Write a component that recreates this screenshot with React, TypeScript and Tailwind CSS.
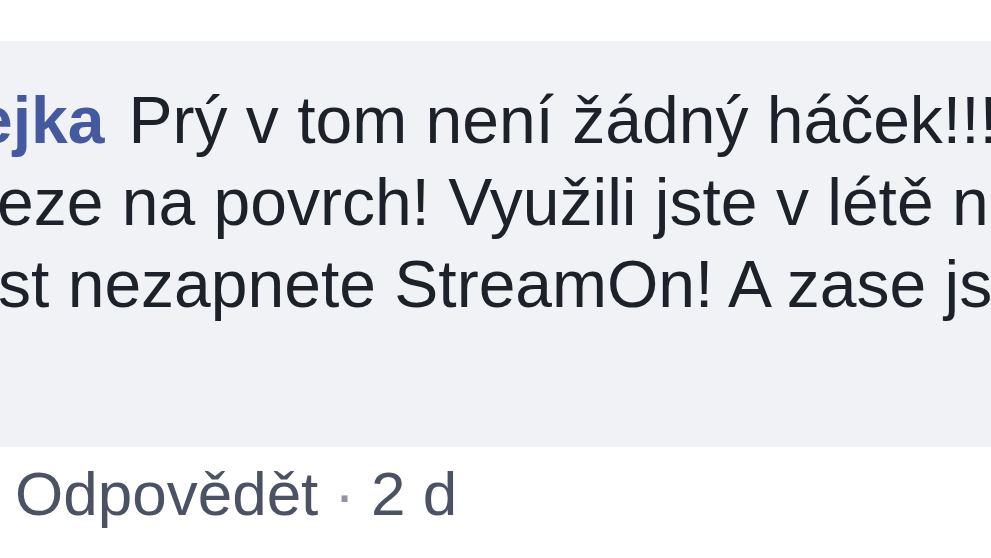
export default function App() {
  return (
    <div className="h-[558px] w-[991px] overflow-hidden bg-white font-['Liberation_Sans',Arial,sans-serif]">
      <div className="h-[41px]" />

      {/* comment bubble */}
      <div className="h-[406px] bg-[#f1f2f5] pt-[38px] text-[66px] leading-[82px] text-[#1d2129] whitespace-nowrap">
        <div className="ml-[-24px]">
          <span className="font-bold text-[#4559a0]">ejka</span>
          <span className="ml-[24px]">Prý v tom není žádný háček!!!</span>
        </div>
        <div className="ml-[-3px]">eze na povrch! Využili jste v létě naplno</div>
        <div className="ml-[-2px]">st nezapnete StreamOn! A zase jste</div>
      </div>

      {/* actions */}
      <div className="mt-[11px] flex items-center whitespace-nowrap pl-[15px] text-[62px] leading-[72px] text-[#4b5263]">
        <span>Odpovědět</span>
        <span className="px-[16px] text-[#90949c]">·</span>
        <span>2 d</span>
      </div>
    </div>
  );
}
